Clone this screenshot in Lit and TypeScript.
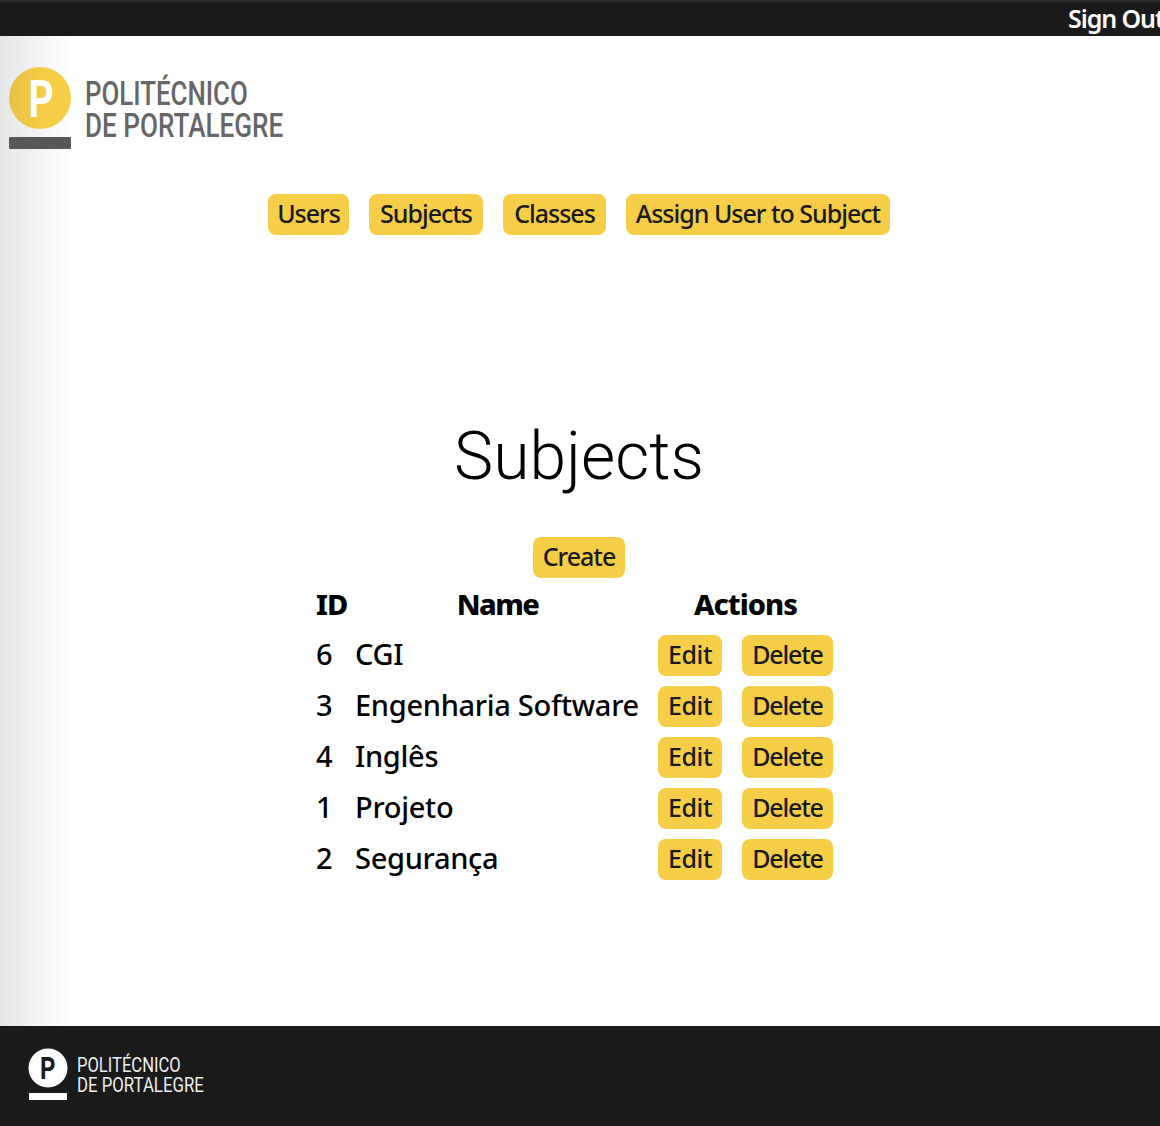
import { LitElement, html, css } from 'lit';
import { customElement } from 'lit/decorators.js';

const subjects = [
  { id: 6, name: 'CGI' },
  { id: 3, name: 'Engenharia Software' },
  { id: 4, name: 'Inglês' },
  { id: 1, name: 'Projeto' },
  { id: 2, name: 'Segurança' },
];

const navLinks = [
  { label: 'Users', width: 81 },
  { label: 'Subjects', width: 114 },
  { label: 'Classes', width: 103 },
  { label: 'Assign User to Subject', width: 264 },
];

@customElement('app-root')
export class AppRoot extends LitElement {
  static styles = css`
    :host {
      display: flex;
      flex-direction: column;
      min-height: 1126px;
      font-family: 'Noto Sans', sans-serif;
      color: #000;
      overflow: hidden;
    }

    .topbar {
      height: 34px;
      background: #1a1a1a;
      border-top: 2px solid #2b2b30;
      display: flex;
      justify-content: flex-end;
      align-items: center;
      overflow: hidden;
    }

    .signout {
      color: #fff;
      font-size: 25px;
      font-weight: 600;
      line-height: 32px;
      letter-spacing: -1.1px;
      margin: 0 -4px 2px 0;
      white-space: nowrap;
    }

    main {
      flex: 1;
      display: flex;
      flex-direction: column;
      background: linear-gradient(to right, #e5e5e5, #fff 70px);
    }

    .logo {
      display: block;
      margin: 31px 0 0 9px;
    }

    .nav {
      display: flex;
      justify-content: center;
      gap: 20px;
      margin: 43px 2px 0 0;
    }

    .btn {
      display: inline-block;
      box-sizing: border-box;
      height: 41px;
      line-height: 39px;
      border-radius: 8px;
      background: #f6cd46;
      color: #1a1a1a;
      font-size: 25px;
      font-weight: 500;
      letter-spacing: -1px;
      text-align: center;
      white-space: nowrap;
    }

    h1 {
      margin: 184px 2px 0 0;
      text-align: center;
      font-family: Roboto, sans-serif;
      font-weight: 300;
      font-size: 66px;
      line-height: 76px;
    }

    .create {
      align-self: center;
      width: 92px;
      margin: 42px 2px 0 0;
    }

    .table {
      display: grid;
      grid-template-columns: 39px 285px 193px;
      width: 517px;
      margin: 6px 0 0 316px;
      font-size: 29px;
      font-weight: 500;
      letter-spacing: -0.3px;
    }

    .th {
      font-weight: 800;
      height: 45px;
      line-height: 40px;
      letter-spacing: -1px;
      text-align: center;
    }

    .th.id {
      text-align: left;
    }

    .th.name {
      letter-spacing: -1.6px;
    }

    .th.actions {
      padding-left: 18px;
    }

    .cell {
      height: 51px;
      line-height: 50px;
    }

    .cell.actions {
      display: flex;
      gap: 20px;
      padding: 6px 0 0 18px;
      box-sizing: border-box;
    }

    .edit {
      width: 64px;
      letter-spacing: -0.4px;
    }

    .delete {
      width: 91px;
      letter-spacing: -1.2px;
    }

    footer {
      height: 100px;
      background: #1a1a1a;
    }

    footer svg {
      display: block;
    }
  `;

  private _logo() {
    return html`
      <svg class="logo" width="280" height="84" viewBox="0 0 280 84">
        <defs>
          <linearGradient id="fade">
            <stop offset="0" stop-color="#e6c145"></stop>
            <stop offset="0.6" stop-color="#f6cd46"></stop>
          </linearGradient>
        </defs>
        <circle cx="31" cy="31" r="31" fill="url(#fade)"></circle>
        <text transform="translate(19.5 50) scale(.75 1)" font-family="Roboto" font-weight="700" font-size="52" fill="#fff">P</text>
        <rect x="0" y="70" width="62" height="12" rx="1" fill="#58585a"></rect>
        <text transform="translate(76 38) scale(.76 1)" font-family="Roboto" font-weight="500" font-size="34" fill="#666">POLITÉCNICO</text>
        <text transform="translate(76 70) scale(.768 1)" font-family="Roboto" font-weight="500" font-size="34" fill="#666">DE PORTALEGRE</text>
      </svg>
    `;
  }

  private _footerLogo() {
    return html`
      <svg width="240" height="100" viewBox="0 0 240 100">
        <circle cx="48" cy="42" r="19.5" fill="#fff"></circle>
        <text transform="translate(40 53) scale(.75 1)" font-family="Roboto" font-weight="700" font-size="32" fill="#1a1a1a">P</text>
        <rect x="29" y="67" width="38" height="7" fill="#fff"></rect>
        <text transform="translate(77 46) scale(.79 1)" font-family="Roboto" font-size="21" fill="#eee">POLITÉCNICO</text>
        <text transform="translate(77 66) scale(.8 1)" font-family="Roboto" font-size="21" fill="#eee">DE PORTALEGRE</text>
      </svg>
    `;
  }

  protected render() {
    return html`
      <div class="topbar"><span class="signout">Sign Out</span></div>
      <main>
        ${this._logo()}
        <nav class="nav">
          ${navLinks.map(l => html`<a class="btn" style="width:${l.width}px">${l.label}</a>`)}
        </nav>
        <h1>Subjects</h1>
        <a class="btn create">Create</a>
        <div class="table">
          <div class="th id">ID</div>
          <div class="th name">Name</div>
          <div class="th actions">Actions</div>
          ${subjects.map(s => html`
            <div class="cell">${s.id}</div>
            <div class="cell">${s.name}</div>
            <div class="cell actions">
              <a class="btn edit">Edit</a>
              <a class="btn delete">Delete</a>
            </div>
          `)}
        </div>
      </main>
      <footer>${this._footerLogo()}</footer>
    `;
  }
}
